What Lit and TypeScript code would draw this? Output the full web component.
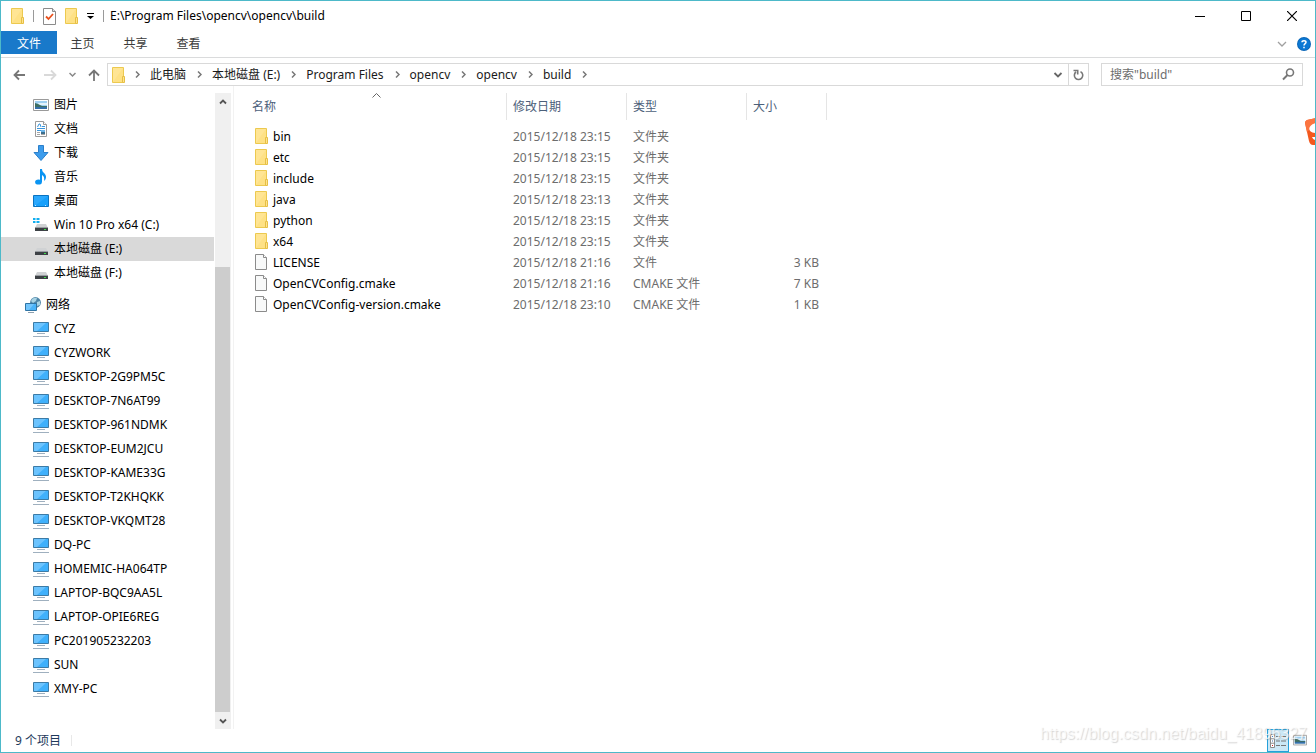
import { LitElement, html, svg, css } from "lit";
import { customElement } from "lit/decorators.js";

type Icon = "picture" | "document" | "download" | "music" | "desktop" | "sysdrive" | "drive" | "pc";

interface NavItem {
  icon: Icon;
  label: string;
  selected?: boolean;
}

interface Entry {
  name: string;
  date: string;
  type: string;
  size: string;
  folder: boolean;
}

const places: NavItem[] = [
  { icon: "picture", label: "图片" },
  { icon: "document", label: "文档" },
  { icon: "download", label: "下载" },
  { icon: "music", label: "音乐" },
  { icon: "desktop", label: "桌面" },
  { icon: "sysdrive", label: "Win 10 Pro x64 (C:)" },
  { icon: "drive", label: "本地磁盘 (E:)", selected: true },
  { icon: "drive", label: "本地磁盘 (F:)" },
];

const computers = [
  "CYZ", "CYZWORK", "DESKTOP-2G9PM5C", "DESKTOP-7N6AT99", "DESKTOP-961NDMK",
  "DESKTOP-EUM2JCU", "DESKTOP-KAME33G", "DESKTOP-T2KHQKK", "DESKTOP-VKQMT28",
  "DQ-PC", "HOMEMIC-HA064TP", "LAPTOP-BQC9AA5L", "LAPTOP-OPIE6REG",
  "PC201905232203", "SUN", "XMY-PC",
];

const entries: Entry[] = [
  { name: "bin", date: "2015/12/18 23:15", type: "文件夹", size: "", folder: true },
  { name: "etc", date: "2015/12/18 23:15", type: "文件夹", size: "", folder: true },
  { name: "include", date: "2015/12/18 23:15", type: "文件夹", size: "", folder: true },
  { name: "java", date: "2015/12/18 23:13", type: "文件夹", size: "", folder: true },
  { name: "python", date: "2015/12/18 23:15", type: "文件夹", size: "", folder: true },
  { name: "x64", date: "2015/12/18 23:15", type: "文件夹", size: "", folder: true },
  { name: "LICENSE", date: "2015/12/18 21:16", type: "文件", size: "3 KB", folder: false },
  { name: "OpenCVConfig.cmake", date: "2015/12/18 21:16", type: "CMAKE 文件", size: "7 KB", folder: false },
  { name: "OpenCVConfig-version.cmake", date: "2015/12/18 23:10", type: "CMAKE 文件", size: "1 KB", folder: false },
];

const crumbs = ["此电脑", "本地磁盘 (E:)", "Program Files", "opencv", "opencv", "build"];

const folderIcon = html`<svg class="icon" width="13" height="16" viewBox="0 0 13 16" aria-hidden="true">
  <path d="M.5.5h11v15H.5z" fill="#ffe594" stroke="#ecc94f" />
  <path d="M1 15 11 1v14z" fill="#fddd7c" opacity=".6" />
  <path d="M10.500 9.500h2v6h-2z" fill="#ffe38c" stroke="#e6bf45" />
</svg>`;

const fileIcon = html`<svg class="icon" width="13" height="16" viewBox="0 0 13 16" aria-hidden="true">
  <path d="M.5.5h8l3 3v12H.5z" fill="#f8f9f9" stroke="#8b8b8b" />
  <path d="M8.500 .5v3h3" fill="#fff" stroke="#8b8b8b" />
</svg>`;

const pictureShapes = svg`
  <path d="M.5 2.500h15v11H.5z" fill="#fff" stroke="#9a9a9a" />
  <path d="M2 4h12v8H2z" fill="#9fd0f2" />
  <path d="M5 6h9v2H6z" fill="#e4f3fb" />
  <path d="M2 6l3 1 4 2h5v1H2z" fill="#3f6f62" />
  <path d="M2 10h12v2H2z" fill="#356fa8" />`;

const driveShapes = svg`
  <path d="M4 7h9l2 4H2z" fill="#d0d2d4" />
  <path d="M2 11h13v3H2z" fill="#3d4145" />
  <path d="M2 10h13v1H2z" fill="#9a9ea2" />
  <path d="M11 12h2v1h-2z" fill="#3ee04a" />`;

const shapes: Record<Icon, unknown> = {
  picture: pictureShapes,
  document: svg`
    <path d="M2.500 .5h8l3 3v12h-11z" fill="#fff" stroke="#9a9a9a" />
    <path d="M10.500 .5v3h3" fill="#fff" stroke="#9a9a9a" />
    <path d="M4.500 6 6 3h1l1 3M9 5.500h3M4 7.500h8M4 9.500h4" fill="none" stroke="#3a96dd" />
    <path d="M4 11.500h3M4 13.500h3M8 13.500h4" stroke="#a5a5a5" />
    <path d="M8 9h4v4H8z" fill="#6ab4e8" /><path d="M8 11h4v2H8z" fill="#3d6f8e" />`,
  download: svg`<path d="M5.500 .5h5v7h4.500L8 15.500 1 7.500h4.500z" fill="#3c9cec" stroke="#2b7fca" stroke-linejoin="round" />`,
  music: svg`
    <ellipse cx="5.500" cy="13" rx="3.400" ry="2.600" fill="#0a94f2" />
    <path d="M7 0h2c0 4 4 4 4 8 0 2-1 3-2 4 .6-3 0-5-2-6v7H7z" fill="#0a94f2" />`,
  desktop: svg`
    <path d="M.5 2.500h15v11H.5z" fill="#17a0fb" stroke="#0a73c0" />
    <path d="M1 3h14L3 12H1z" fill="#3db0ff" opacity=".5" />
    <path d="M2 12.500h2M12 12.500h2" stroke="#bfe4ff" stroke-dasharray="1 1" />`,
  sysdrive: svg`${driveShapes}
    <path d="M0 1h2.500v2H0zM3.500 1h3v2h-3zM0 4h2.500v2H0zM3.500 4h3v2h-3z" fill="#12aeef" />`,
  drive: driveShapes,
  pc: svg`
    <path d="M.5 1.500h15v9H.5z" fill="#3fb0fb" stroke="#3c7ba6" />
    <path d="M1 2h12L4 10H1z" fill="#7fccff" opacity=".7" />
    <path d="M4 12.500h8M0 15.500h16" stroke="#9fb0bf" />`,
};

const navIcon = (name: Icon) =>
  html`<svg class="icon" width="16" height="16" viewBox="0 0 16 16" aria-hidden="true">${shapes[name]}</svg>`;

const networkIcon = html`<svg class="icon" width="16" height="16" viewBox="0 0 16 16" aria-hidden="true">
  <circle cx="10.500" cy="5.500" r="5.400" fill="#4f86a8" />
  <path d="M6 4c1-3 4-4 6-3l-1 3-3 2zM12 5l3-1v4l-3 1z" fill="#a8d3e4" />
  <path d="M.5 6.500h11v7H.5z" fill="#49b3f9" stroke="#2f74a4" />
  <path d="M1 7h8l-5 6H1z" fill="#85cdfd" opacity=".7" />
  <path d="M3 15.500h6" stroke="#8da0af" />
</svg>`;

const chevron = (w: number, d: string, color: string, stroke: string) =>
  html`<svg width=${w} height=${w} viewBox="0 0 ${w} ${w}" fill="none" stroke=${color} stroke-width=${stroke} aria-hidden="true"><path d=${d} /></svg>`;

@customElement("app-root")
export class AppRoot extends LitElement {
  static styles = css`
    :host {
      display: block;
      font-family: "Noto Sans", "Noto Sans CJK SC", sans-serif;
      font-size: 12px;
      line-height: 16px;
      color: #000;
    }
    * { box-sizing: border-box; }
    svg { display: block; flex: none; }
    button {
      display: flex;
      align-items: center;
      justify-content: center;
      margin: 0;
      padding: 0;
      border: 0;
      background: none;
      font: inherit;
      color: inherit;
    }
    .window {
      position: relative;
      display: flex;
      flex-direction: column;
      min-height: 100vh;
      overflow: hidden;
      border: 1px solid #4db9c9;
      background: #fff;
    }
    .titlebar { display: flex; align-items: center; height: 30px; padding-left: 10px; }
    .quick { display: flex; align-items: center; gap: 9px; }
    .quick .rule { width: 1px; height: 12px; background: #9a9a9a; }
    .title { flex: 1; margin: 0 0 0 6px; font-size: 12px; font-weight: 400; white-space: nowrap; }
    .controls { display: flex; }
    .controls button { width: 46px; height: 30px; }
    .ribbon {
      display: flex;
      align-items: flex-start;
      height: 27px;
      border-bottom: 1px solid #dadbdc;
      color: #3b3b3b;
    }
    .tab { width: 53px; height: 23px; padding: 2px 2px 0 0; }
    .tab.file { width: 56px; padding-right: 0; background: #1979ca; color: #fff; }
    .ribbon-tools { display: flex; align-items: center; gap: 10px; height: 26px; margin-left: auto; padding-right: 4px; }
    .navbar { display: flex; align-items: center; padding: 5px 12px 0 12px; }
    .history { display: flex; align-items: center; gap: 12px; width: 94px; }
    .address { display: flex; flex: 1; height: 23px; border: 1px solid #d9d9d9; }
    .crumbs { display: flex; flex: 1; align-items: center; gap: 10px; padding-left: 4px; color: #1a1a1a; white-space: nowrap; }
    .crumbs button { padding-right: 1px; }
    .drop { width: 20px; }
    .refresh { width: 20px; border-left: 1px solid #d9d9d9; }
    .search {
      display: flex;
      align-items: center;
      width: 202px;
      height: 23px;
      margin-left: 12px;
      padding: 0 7px 0 8px;
      border: 1px solid #d9d9d9;
    }
    .search input {
      flex: 1;
      min-width: 0;
      padding: 0;
      border: 0;
      outline: 0;
      background: none;
      font: inherit;
    }
    .search input::placeholder { color: #6d6d6d; opacity: 1; }
    .body { display: flex; flex: 1; }
    .nav { width: 213px; padding-top: 7px; }
    .nav ul { margin: 0; padding: 0; list-style: none; }
    .nav a {
      display: flex;
      align-items: center;
      gap: 5px;
      height: 24px;
      padding-left: 32px;
      color: inherit;
      text-decoration: none;
      white-space: nowrap;
    }
    .nav a.selected { background: #d9d9d9; }
    .nav a.group { margin-top: 8px; padding-left: 24px; }
    .scrollbar {
      display: flex;
      flex-direction: column;
      width: 16px;
      margin: 7px 2px 0 1px;
      background: #f0f0f0;
    }
    .scrollbar button { height: 17px; }
    .track { display: flex; flex: 1; flex-direction: column; justify-content: flex-end; }
    .thumb { width: 15px; height: 74%; background: #cdcdcd; }
    .main { flex: 1; padding: 7px 0 0 6px; border-left: 1px solid #f2f2f2; }
    table { width: 587px; border-collapse: collapse; table-layout: fixed; }
    .c-name { width: 267px; }
    .c-mid { width: 120px; }
    .c-size { width: 80px; }
    th { position: relative; height: 27px; padding: 0 0 0 6px; box-shadow: inset -1px 0 #e5e5e5; font-weight: 400; text-align: left; color: #4c607a; }
    th:first-child { padding-left: 12px; }
    .sort { position: absolute; top: 0; left: 132px; }
    tbody::before { content: ""; display: block; height: 6px; }
    td { height: 21px; padding: 0 0 0 6px; color: #6d6d6d; white-space: nowrap; }
    td:first-child { padding-left: 15px; color: #000; }
    td:last-child { padding-right: 8px; text-align: right; }
    .entry { display: flex; align-items: center; gap: 5px; }
    .entry .icon { margin-bottom: 1px; }
    .status { display: flex; align-items: center; height: 23px; padding: 0 4px 0 14px; color: #1e395b; }
    .status .rule { width: 1px; height: 11px; margin-left: 10px; background: #e8e8e8; }
    .views { display: flex; margin-left: auto; }
    .views button { width: 22px; height: 23px; }
    .views .on { border: 1px solid #26a0da; background: #cbe8f6; }
    .watermark {
      position: absolute;
      right: 8px;
      bottom: 8px;
      font: 16px/20px "Liberation Sans", sans-serif;
      color: rgba(255, 255, 255, 0.7);
      text-shadow: 1px 1px 1px rgba(120, 120, 120, 0.3);
      pointer-events: none;
    }
    .badge { position: absolute; top: 117px; right: -1px; }
  `;

  private navLink(item: NavItem) {
    return html`<li><a href="#" class=${item.selected ? "selected" : ""}>${navIcon(item.icon)}<span>${item.label}</span></a></li>`;
  }

  private crumbArrow() {
    return html`<svg width="5" height="7" viewBox="0 0 5 7" fill="none" stroke="#777" stroke-width="1.500" aria-hidden="true"><path d="M1 .5l3 3-3 3" /></svg>`;
  }

  render() {
    return html`
      <div class="window">
        <header class="titlebar">
          <div class="quick">
            ${folderIcon}
            <span class="rule"></span>
            <button aria-label="属性">
              <svg width="13" height="17" viewBox="0 0 13 17"><path d="M.5.5h9l3 3v13H.5z" fill="#fff" stroke="#8b8b8b" /><path d="M9.500 .5v3h3" fill="#ddd" stroke="#8b8b8b" /><path d="M3 8.500 5.500 11 10 6" fill="none" stroke="#e8501c" stroke-width="1.800" /></svg>
            </button>
            <button aria-label="新建文件夹">${folderIcon}</button>
            <button aria-label="自定义快速访问工具栏">
              <svg width="7" height="6" viewBox="0 0 7 6"><path d="M0 0h7v1H0zM0 3h7L3.500 6z" /></svg>
            </button>
            <span class="rule"></span>
          </div>
          <h1 class="title">E:\\Program Files\\opencv\\opencv\\build</h1>
          <div class="controls">
            <button aria-label="最小化"><svg width="10" height="10" viewBox="0 0 10 10"><path d="M0 5h10v1H0z" /></svg></button>
            <button aria-label="最大化"><svg width="10" height="10" viewBox="0 0 10 10"><path d="M.5.5h9v9h-9z" fill="none" stroke="#000" /></svg></button>
            <button aria-label="关闭"><svg width="10" height="10" viewBox="0 0 10 10"><path d="M0 0l10 10M10 0 0 10" fill="none" stroke="#000" stroke-width="1.200" /></svg></button>
          </div>
        </header>

        <nav class="ribbon">
          <button class="tab file">文件</button>
          <button class="tab">主页</button>
          <button class="tab">共享</button>
          <button class="tab">查看</button>
          <div class="ribbon-tools">
            <button aria-label="展开功能区">${chevron(10, "M1 3l4 4 4-4", "#a0a0a0", "1.3")}</button>
            <button aria-label="帮助">
              <svg width="14" height="14" viewBox="0 0 14 14"><circle cx="7" cy="7" r="7" fill="#0a66b8" /><circle cx="7" cy="7" r="6" fill="#0b78d4" /><path d="M5 5.300C5 3.200 9 3.200 9 5.300 9 6.700 7 6.700 7 8.500M7 9.700v1.500" fill="none" stroke="#fff" stroke-width="1.500" /></svg>
            </button>
          </div>
        </nav>

        <div class="navbar">
          <div class="history">
            <button aria-label="后退"><svg width="14" height="12" viewBox="0 0 14 12" fill="none" stroke="#777" stroke-width="1.800"><path d="M1.500 6H12M6 1.500 1.500 6 6 10.500" /></svg></button>
            <button aria-label="前进"><svg width="18" height="12" viewBox="-4 0 18 12" fill="none" stroke="#d9d9d9" stroke-width="1.800"><path d="M1 6h11.500M8 1.500l4.500 4.500L8 10.500" /></svg></button>
            <button aria-label="最近位置"><svg width="7" height="6" viewBox="0 0 7 6" fill="none" stroke="#888" stroke-width="1.500"><path d="M.5 1l3 3 3-3" /></svg></button>
            <button aria-label="向上"><svg width="12" height="12" viewBox="0 0 12 12" fill="none" stroke="#777" stroke-width="1.800"><path d="M6 12V1.500M1 6.500l5-5 5 5" /></svg></button>
          </div>
          <div class="address">
            <div class="crumbs">
              ${folderIcon}
              ${this.crumbArrow()}
              ${crumbs.map((c) => html`<button>${c}</button>${this.crumbArrow()}`)}
            </div>
            <button class="drop" aria-label="以前的位置">${chevron(10, "M1.500 3 5 6.500 8.500 3", "#666", "1.800")}</button>
            <button class="refresh" aria-label="刷新">
              <svg width="11" height="12" viewBox="0 0 11 12" fill="none" stroke="#777" stroke-width="1.600"><path d="M7.500 2.600A4.200 4.200 0 1 1 3 3M.5 1.500h4.200v4" /></svg>
            </button>
          </div>
          <label class="search">
            <input type="text" aria-label="搜索" placeholder='搜索"build"' />
            <svg width="13" height="13" viewBox="0 0 13 13" fill="none" stroke="#777" stroke-width="1.600"><circle cx="8" cy="4.500" r="3.500" /><path d="M5.500 7 1 11.500" stroke-width="2" /></svg>
          </label>
        </div>

        <div class="body">
          <nav class="nav">
            <ul>
              ${places.map((p) => this.navLink(p))}
              <li><a href="#" class="group">${networkIcon}<span>网络</span></a></li>
              ${computers.map((label) => this.navLink({ icon: "pc", label }))}
            </ul>
          </nav>
          <div class="scrollbar">
            <button aria-label="向上滚动">${chevron(8, "M1 5.500l3-3 3 3", "#555", "1.800")}</button>
            <div class="track"><div class="thumb"></div></div>
            <button aria-label="向下滚动">${chevron(8, "M1 2.500l3 3 3-3", "#555", "1.800")}</button>
          </div>
          <main class="main">
            <table>
              <colgroup><col class="c-name" /><col class="c-mid" /><col class="c-mid" /><col class="c-size" /></colgroup>
              <thead>
                <tr>
                  <th scope="col">名称<svg class="sort" width="9" height="5" viewBox="0 0 9 5" fill="none" stroke="#666"><path d="M.5 4.500l4-4 4 4" /></svg></th>
                  <th scope="col">修改日期</th>
                  <th scope="col">类型</th>
                  <th scope="col">大小</th>
                </tr>
              </thead>
              <tbody>
                ${entries.map((e) => html`<tr>
                  <td><div class="entry">${e.folder ? folderIcon : fileIcon}<span>${e.name}</span></div></td>
                  <td>${e.date}</td>
                  <td>${e.type}</td>
                  <td>${e.size}</td>
                </tr>`)}
              </tbody>
            </table>
          </main>
        </div>

        <footer class="status">
          <span>${entries.length} 个项目</span>
          <span class="rule"></span>
          <div class="views">
            <button class="on" aria-label="详细信息">
              <svg width="16" height="14" viewBox="0 0 16 14" fill="none"><path d="M.5.5h4v13h-4zM.5 4.800h4M.5 9.200h4" fill="#fff" stroke="#8b8b8b" /><path d="M6 2.500h4M11 2.500h5M6 7h4M11 7h5M6 11.500h4M11 11.500h5" stroke="#777" /><path d="M2 2h1v1H2zM2 6.500h1v1H2z" fill="#3a6ea5" /><path d="M2 11h1v1H2z" fill="#c22" /></svg>
            </button>
            <button aria-label="大图标"><svg width="14" height="14" viewBox="0 1 16 16">${pictureShapes}</svg></button>
          </div>
        </footer>
        <svg class="badge" width="11" height="28" viewBox="0 0 11 28" aria-hidden="true">
          <path d="M11 0 2 2Q0 3 0 5l4 18q1 4 4 4h3z" fill="#f4581d" />
          <path d="M11 0 2 2Q0 3 0 5l2 9 9-8z" fill="#fb7440" />
          <path d="M11 5C2 7 2 15 11 15zM7 19q1 3 4 3v-3z" fill="#fff" />
        </svg>
        <div class="watermark">https://blog.csdn.net/baidu_41896327</div>
      </div>
    `;
  }
}
